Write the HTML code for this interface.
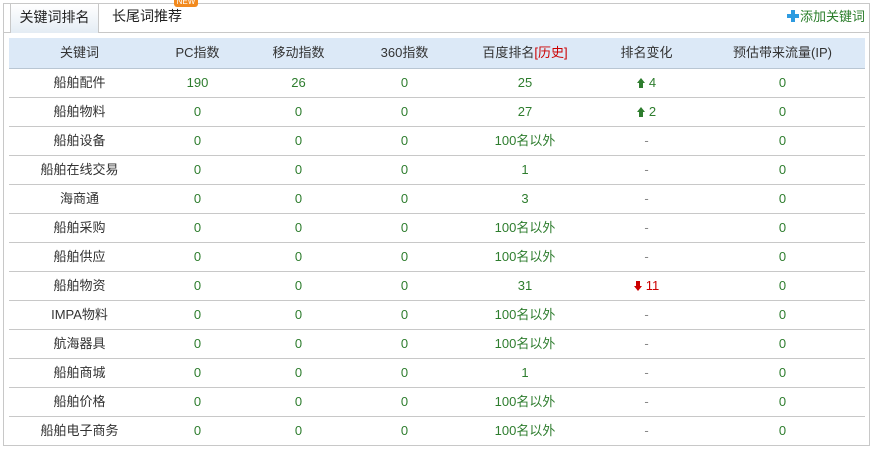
<!DOCTYPE html>
<html><head><meta charset="utf-8"><style>
*{margin:0;padding:0;box-sizing:border-box}
body{width:874px;height:449px;background:#fff;font-family:"Liberation Sans","Noto Sans CJK SC",sans-serif;font-size:13px;color:#333;position:relative;overflow:hidden}
.box{position:absolute;left:3px;top:3px;width:867px;height:443px;border:1px solid #c8c8c8;border-top:none}
.tabbar{position:absolute;left:3px;top:3px;width:867px;height:30px;border-top:1px solid #c8c8c8;border-bottom:1px solid #c8c8c8}
.tab1{position:absolute;left:10px;top:3px;width:89px;height:30px;background:linear-gradient(#fff,#e4ecf4);border:1px solid #c8c8c8;border-bottom:none;text-align:center;line-height:26px;color:#222;font-size:14px}
.tab2{position:absolute;left:112px;top:3px;line-height:26px;font-size:14px;color:#222}
.new{position:absolute;left:174px;top:-4px;width:24px;height:11px;background:#f28a1e;border-radius:3px;color:#fff;font-size:8px;line-height:11px;text-align:center}
.add{position:absolute;right:9px;top:8px;color:#2a7d2a;font-size:13px;line-height:18px}
.add b{display:inline-block;position:relative;width:12px;height:12px;vertical-align:-1px;margin-right:1px}
.add b:before{content:"";position:absolute;left:4px;top:0;width:4px;height:12px;background:#2e9be0}
.add b:after{content:"";position:absolute;left:0;top:4px;width:12px;height:4px;background:#2e9be0}
table{position:absolute;left:9px;top:38px;width:856px;border-collapse:collapse;table-layout:fixed}
th,td{padding:0;line-height:18px;vertical-align:middle;text-align:center}
th{background:#dce9f7;height:30px;font-weight:normal;color:#333;border-bottom:1px solid #b9c6d3}
td{height:29px;color:#2e7d2e;border-bottom:1px solid #c8c8c8;padding-top:1px}
td:first-child{color:#333}
.r{color:#c00}
.d{color:#888}
.ua,.da{display:inline-block;position:relative;width:8px;height:10px;margin-right:4px;vertical-align:-1px}
.ua:before{content:"";position:absolute;left:0;top:0;border-left:4px solid transparent;border-right:4px solid transparent;border-bottom:5px solid #2e7d2e}
.ua:after{content:"";position:absolute;left:2px;top:5px;width:4px;height:5px;background:#2e7d2e}
.da:before{content:"";position:absolute;left:2px;top:0;width:4px;height:5px;background:#c00}
.da:after{content:"";position:absolute;left:0;top:5px;border-left:4px solid transparent;border-right:4px solid transparent;border-top:5px solid #c00}
</style></head><body>
<div class="box"></div>
<div class="tabbar"></div>
<div class="tab1">关键词排名</div>
<div class="tab2">长尾词推荐</div>
<div class="new">NEW</div>
<div class="add"><b></b>添加关键词</div>
<table>
<colgroup><col style="width:141px"><col style="width:95px"><col style="width:107px"><col style="width:105px"><col style="width:136px"><col style="width:107px"><col style="width:165px"></colgroup>
<tr><th>关键词</th><th>PC指数</th><th>移动指数</th><th>360指数</th><th>百度排名<span class="r">[历史]</span></th><th>排名变化</th><th>预估带来流量(IP)</th></tr>
<tr><td>船舶配件</td><td>190</td><td>26</td><td>0</td><td>25</td><td><span class="ua"></span>4</td><td>0</td></tr>
<tr><td>船舶物料</td><td>0</td><td>0</td><td>0</td><td>27</td><td><span class="ua"></span>2</td><td>0</td></tr>
<tr><td>船舶设备</td><td>0</td><td>0</td><td>0</td><td>100名以外</td><td class="d">-</td><td>0</td></tr>
<tr><td>船舶在线交易</td><td>0</td><td>0</td><td>0</td><td>1</td><td class="d">-</td><td>0</td></tr>
<tr><td>海商通</td><td>0</td><td>0</td><td>0</td><td>3</td><td class="d">-</td><td>0</td></tr>
<tr><td>船舶采购</td><td>0</td><td>0</td><td>0</td><td>100名以外</td><td class="d">-</td><td>0</td></tr>
<tr><td>船舶供应</td><td>0</td><td>0</td><td>0</td><td>100名以外</td><td class="d">-</td><td>0</td></tr>
<tr><td>船舶物资</td><td>0</td><td>0</td><td>0</td><td>31</td><td class="r"><span class="da"></span>11</td><td>0</td></tr>
<tr><td>IMPA物料</td><td>0</td><td>0</td><td>0</td><td>100名以外</td><td class="d">-</td><td>0</td></tr>
<tr><td>航海器具</td><td>0</td><td>0</td><td>0</td><td>100名以外</td><td class="d">-</td><td>0</td></tr>
<tr><td>船舶商城</td><td>0</td><td>0</td><td>0</td><td>1</td><td class="d">-</td><td>0</td></tr>
<tr><td>船舶价格</td><td>0</td><td>0</td><td>0</td><td>100名以外</td><td class="d">-</td><td>0</td></tr>
<tr><td>船舶电子商务</td><td>0</td><td>0</td><td>0</td><td>100名以外</td><td class="d">-</td><td>0</td></tr>
</table>
</body></html>
